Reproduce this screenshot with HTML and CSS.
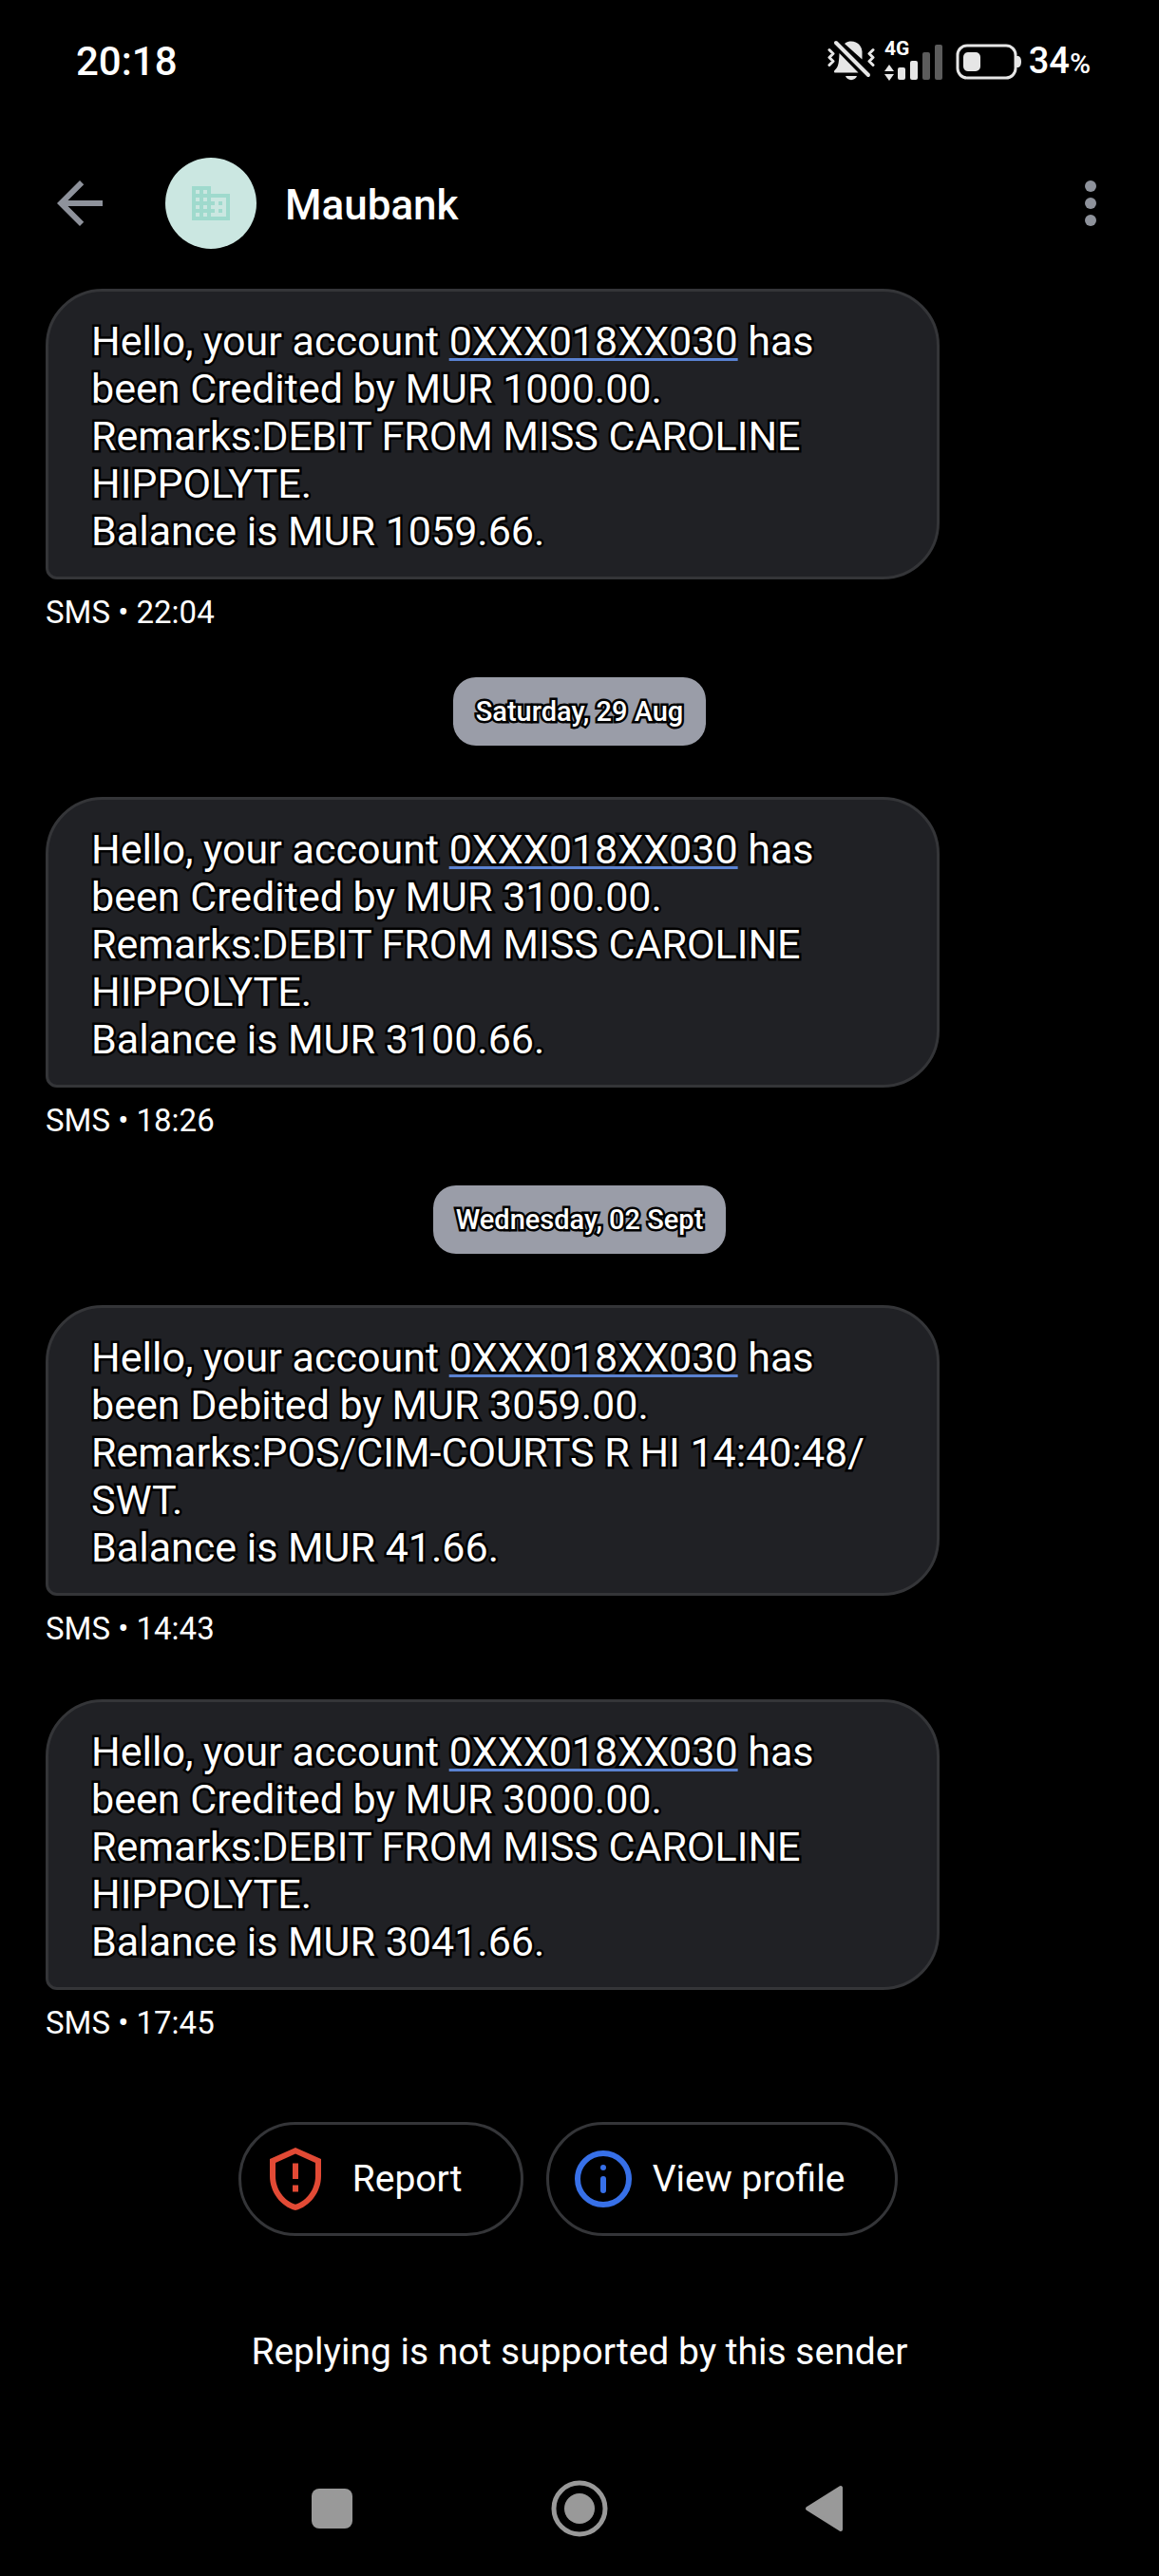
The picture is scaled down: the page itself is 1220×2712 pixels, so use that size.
FILE: index.html
```html
<!DOCTYPE html>
<html lang="en">
  <head>
    <meta charset="UTF-8" />
    <meta name="viewport" content="width=device-width, initial-scale=1.0" />
    <title>Maubank</title>
    <link rel="stylesheet" href="styles.css">
  </head>
  <body>
    <div class="status-bar">
      <time class="clock">20:18</time>
      <div class="status-icons">
        <svg class="icon-silent" width="50" height="44" viewBox="0 0 50 44">
          <path d="M18 4c2-2 5-2.500 7-2.500 7 0 11 5 11.500 11v8z" fill="#e6e6e6" />
          <path d="M12.500 14l20 20.500H7.500c-1-1-.5-2 .5-3 3-3 4-5 4.500-17.500z" fill="#e6e6e6" />
          <path d="M19 38h12c-1.500 5.500-10.500 5.500-12 0z" fill="#e6e6e6" />
          <path d="M9 3l34 34" stroke="#e6e6e6" stroke-width="4" stroke-linecap="round" />
          <path d="M2 11l4 4-4 4 4 4-4 4M48 11l-4 4 4 4-4 4 4 4" transform="translate(0 -.5)" fill="none" stroke="#e6e6e6" stroke-width="3" stroke-linejoin="round" stroke-linecap="round" />
        </svg>
        <svg class="icon-signal" width="62" height="54" viewBox="0 -5 62 54">
          <text class="network" x="0" y="16">4G</text>
          <path d="M5 26l5 7H0zM5 43l5-7H0z" fill="#e6e6e6" />
          <rect x="14" y="29" width="8" height="13" rx="2" fill="#e6e6e6" />
          <rect x="27" y="22" width="8" height="20" rx="2" fill="#e6e6e6" />
          <rect x="40" y="13" width="8" height="29" rx="2" fill="#5c5c5c" />
          <rect x="53" y="5" width="8" height="37" rx="2" fill="#5c5c5c" />
        </svg>
        <svg class="icon-battery" width="70" height="44" viewBox="0 0 70 44">
          <rect x="2" y="6" width="61" height="34" rx="10" fill="none" stroke="#e6e6e6" stroke-width="3" />
          <rect x="8" y="13" width="18" height="20" rx="5" fill="#e6e6e6" />
          <path d="M64 17h2q3 1 3 6t-3 6h-2z" fill="#e6e6e6" />
        </svg>
        <span class="percent">34<small>%</small></span>
      </div>
    </div>

    <header class="toolbar">
      <button class="icon-button" aria-label="Back">
        <svg width="72" height="72" viewBox="0 0 24 24" fill="#8e929b"><path d="M20 11H7.830l5.590-5.590L12 4l-8 8 8 8 1.410-1.410L7.830 13H20v-2z" /></svg>
      </button>
      <div class="avatar">
        <svg width="48" height="48" viewBox="0 0 24 24" fill="#9fdacd"><path d="M12 7V3H2v18h20V7H12zM6 19H4v-2h2v2zm0-4H4v-2h2v2zm0-4H4V9h2v2zm0-4H4V5h2v2zm4 12H8v-2h2v2zm0-4H8v-2h2v2zm0-4H8V9h2v2zm0-4H8V5h2v2zm10 12h-8v-2h2v-2h-2v-2h2v-2h-2V9h8v10zm-2-8h-2v2h2v-2zm0 4h-2v2h2v-2z" /></svg>
      </div>
      <h1>Maubank</h1>
      <button class="icon-button" aria-label="More options">
        <svg width="72" height="72" viewBox="0 0 24 24" fill="#8e929b"><circle cx="12" cy="6" r="2" /><circle cx="12" cy="12" r="2" /><circle cx="12" cy="18" r="2" /></svg>
      </button>
    </header>

    <main class="thread">
      <article class="message">
        <p class="bubble">
          Hello, your account <a href="#">0XXX018XX030</a> has been Credited by MUR 1000.00.<br>
          Remarks:DEBIT FROM MISS CAROLINE HIPPOLYTE.<br>
          Balance is MUR 1059.66.
        </p>
        <p class="meta">SMS • 22:04</p>
      </article>

      <p class="date">Saturday, 29 Aug</p>

      <article class="message">
        <p class="bubble">
          Hello, your account <a href="#">0XXX018XX030</a> has been Credited by MUR 3100.00.<br>
          Remarks:DEBIT FROM MISS CAROLINE HIPPOLYTE.<br>
          Balance is MUR 3100.66.
        </p>
        <p class="meta">SMS • 18:26</p>
      </article>

      <p class="date">Wednesday, 02 Sept</p>

      <article class="message">
        <p class="bubble">
          Hello, your account <a href="#">0XXX018XX030</a> has been Debited by MUR 3059.00.<br>
          Remarks:POS/CIM-COURTS R HI 14:40:48/<wbr>SWT.<br>
          Balance is MUR 41.66.
        </p>
        <p class="meta">SMS • 14:43</p>
      </article>

      <article class="message">
        <p class="bubble">
          Hello, your account <a href="#">0XXX018XX030</a> has been Credited by MUR 3000.00.<br>
          Remarks:DEBIT FROM MISS CAROLINE HIPPOLYTE.<br>
          Balance is MUR 3041.66.
        </p>
        <p class="meta">SMS • 17:45</p>
      </article>
    </main>

    <div class="actions">
      <button class="action">
        <svg width="72" height="72" viewBox="0 0 24 24" fill="#e24a35">
          <path fill-rule="evenodd" d="M12 1L3 5v6c0 5.550 3.840 10.740 9 12 5.160-1.260 9-6.450 9-12V5l-9-4zm0 2.200l7 3.100V11c0 4.500-3 8.700-7 9.900-4-1.200-7-5.400-7-9.900V6.300l7-3.100z" />
          <path d="M11 6.500h2V12h-2zM11 14.200h2v2.300h-2z" />
        </svg>
        <span>Report</span>
      </button>
      <button class="action">
        <svg width="72" height="72" viewBox="0 0 24 24">
          <circle cx="12" cy="12" r="9" fill="none" stroke="#3770e8" stroke-width="2" />
          <circle cx="12" cy="8" r="1" fill="#3770e8" />
          <rect x="11" y="11" width="2" height="6" rx="1" fill="#3770e8" />
        </svg>
        <span>View profile</span>
      </button>
    </div>

    <p class="notice">Replying is not supported by this sender</p>

    <nav class="nav-bar">
      <button aria-label="Recent apps">
        <svg width="60" height="60" viewBox="0 0 60 60"><rect x="9" y="9" width="43" height="42" rx="8" fill="#999" /></svg>
      </button>
      <button aria-label="Home">
        <svg width="60" height="60" viewBox="0 0 60 60"><circle cx="30" cy="30" r="27" fill="none" stroke="#999" stroke-width="5" /><circle cx="30" cy="30" r="16" fill="#999" /></svg>
      </button>
      <button aria-label="Back">
        <svg width="60" height="60" viewBox="0 0 60 60"><path d="M9 30L44 8v44z" fill="#999" stroke="#999" stroke-width="4" stroke-linejoin="round" /></svg>
      </button>
    </nav>
  </body>
</html>
```
FILE: styles.css
```css
* {
  box-sizing: border-box;
}

body {
  display: flex;
  flex-direction: column;
  min-height: 100vh;
  margin: 0;
  background-color: #000;
  color: #fff;
  font-family: Roboto, sans-serif;
}

h1,
p {
  margin: 0;
}

button {
  padding: 0;
  border: none;
  background: none;
  color: inherit;
  font-family: inherit;
  cursor: pointer;
}

svg {
  display: block;
  flex-shrink: 0;
}

/* status bar */
.status-bar {
  display: flex;
  align-items: center;
  justify-content: space-between;
  height: 128px;
  padding: 0 72px 0 80px;
}

.clock {
  font-size: 42px;
  font-weight: 500;
}

.status-icons {
  display: flex;
  align-items: center;
}

.icon-signal {
  margin: 0 13px 0 10px;
}

.network {
  font-size: 21px;
  font-weight: 700;
  fill: #fff;
}

.percent {
  margin-left: 7px;
  font-size: 38px;
  font-weight: 500;
}

.percent small {
  font-size: 30px;
}

/* toolbar */
.toolbar {
  display: flex;
  align-items: center;
  height: 172px;
  padding: 0 36px 0 48px;
}

.avatar {
  display: flex;
  align-items: center;
  justify-content: center;
  width: 96px;
  height: 96px;
  margin: 0 30px 0 54px;
  border-radius: 50%;
  background-color: #cbe7e1;
}

.toolbar h1 {
  flex: 1;
  padding-top: 4px;
  font-size: 44px;
  font-weight: 500;
}

/* messages */
.thread {
  display: flex;
  flex-direction: column;
  padding: 4px 48px 0;
}

.message {
  margin: 0 183px 54px 0;
}

.bubble {
  padding: 27px 45px 23px;
  border: 3px solid #343538;
  border-radius: 60px 60px 60px 12px;
  background-color: #202125;
  font-size: 43px;
  line-height: 50px;
}

.bubble,
.date {
  -webkit-text-stroke: 5px #000;
  paint-order: stroke fill;
}

.bubble a {
  color: inherit;
  text-decoration: underline 3px #5a82d2;
  text-decoration-skip-ink: none;
  text-underline-offset: 3px;
}

.meta {
  padding-top: 15px;
  font-size: 33px;
  line-height: 40px;
}

.date {
  align-self: center;
  margin: -6px 0 54px;
  padding: 0 24px;
  border-radius: 24px;
  background-color: #9a9da8;
  font-size: 29px;
  font-weight: 500;
  line-height: 72px;
}

/* footer */
.actions {
  display: flex;
  justify-content: center;
  margin-top: 30px;
}

.action {
  display: flex;
  align-items: center;
  gap: 16px;
  min-width: 300px;
  height: 120px;
  margin-right: 24px;
  padding: 0 53px 0 21px;
  border: 3px solid #343538;
  border-radius: 60px;
  font-size: 39px;
}

.action span {
  flex: 1;
}

.notice {
  padding: 96px 48px 0;
  font-size: 39px;
  line-height: 52px;
  text-align: center;
}

.nav-bar {
  display: grid;
  grid-template-columns: repeat(3, 60px);
  justify-content: center;
  gap: 201px;
  margin-top: auto;
  padding-bottom: 41px;
}
```
